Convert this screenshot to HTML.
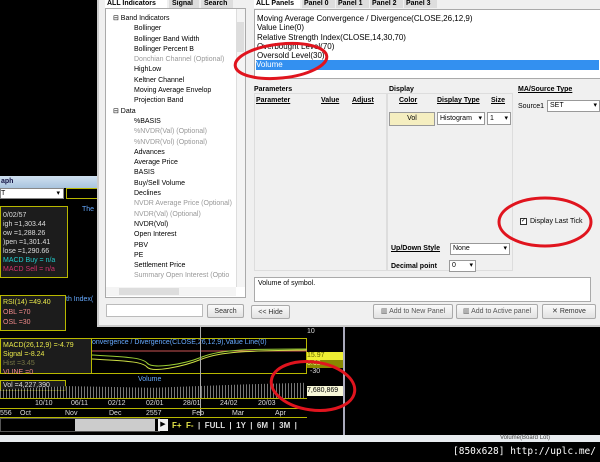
<!DOCTYPE html>
<html><head><meta charset="utf-8"><style>
*{margin:0;padding:0;box-sizing:border-box}
body{width:600px;height:462px;background:#000;position:relative;overflow:hidden;font-family:"Liberation Sans",sans-serif;font-size:7px;color:#000}
.a{position:absolute;white-space:nowrap}
.y{color:#e8e84a}
.box{position:absolute;border:1px solid #b8b800;background:#1c1c1c}
.tree div{height:10.3px;line-height:10.3px}
.g{color:#999}
.btn{position:absolute;background:linear-gradient(#fafafa,#e2e2e2);border:1px solid #aaa;border-radius:2px;text-align:center;line-height:13px;color:#333}
.sel{position:absolute;background:#fff;border:1px solid #999;line-height:10px;padding-left:2px}
.sel:after{content:"▾";position:absolute;right:2px;top:0}
</style></head><body>

<!-- chart window -->
<div class="a" style="left:0;top:176px;width:345px;height:266px;background:#000">
  <div class="a" style="left:0;top:0;width:345px;height:12px;background:linear-gradient(#cfe0f0,#a9c4de);color:#114;font-weight:bold;font-size:7px;line-height:12px;padding-left:1px">aph</div>
  <div class="a" style="left:0;top:12px;width:64px;height:11px;background:#fff;border:1px solid #888;line-height:10px">T<span style="position:absolute;right:3px">▾</span></div>
  <div class="a" style="left:66px;top:12px;width:40px;height:11px;border:1px solid #b8b800"></div>
  <div class="a" style="left:82px;top:30px;color:#6af;font-size:7px">The</div>
  <div class="box" style="left:0;top:30px;width:68px;height:72px;font-size:7px;line-height:9px;padding:4px 2px;color:#ddd">0/02/57<br>igh =1,303.44<br>ow =1,288.26<br>)pen =1,301.41<br>lose =1,290.66<br><span style="color:#2cc">MACD Buy = n/a</span><br><span style="color:#d2336b">MACD Sell = n/a</span></div>
  <div class="box" style="left:0;top:119px;width:66px;height:36px;font-size:7px;line-height:10px;padding:2px 2px;color:#e88"><span class="y">RSI(14) =49.40</span><br>OBL =70<br>OSL =30</div>
  <div class="a" style="left:66px;top:120px;color:#6af">th Index(</div>
  <div class="box" style="left:0;top:162px;width:92px;height:36px;font-size:7px;line-height:9px;padding:2px;color:#e88"><span class="y">MACD(26,12,9) =-4.79</span><br><span class="y">Signal =-8.24</span><br><span style="color:#774">Hist =3.45</span><br>VLINE =0</div>
  <div class="box" style="left:91px;top:162px;width:216px;height:36px;background:#000"></div>
  <div class="a" style="left:92px;top:163px;color:#6af">onvergence / Divergence(CLOSE,26,12,9),Value Line(0)</div>
  <svg class="a" style="left:92px;top:171px" width="215" height="26"><path d="M0 4 H215" stroke="#c55" stroke-width="1"/><path d="M0 8 C30 10 50 10 55 16 S90 18 110 10 S160 2 215 2" stroke="#9c3" fill="none"/><path d="M0 12 C30 14 50 14 55 20 S90 20 110 12 S160 4 215 3" stroke="#cd4" fill="none"/></svg>
  <div class="a" style="left:307px;top:152px;color:#ddd">10</div>
  <div class="a" style="left:307px;top:176px;width:38px;height:8px;background:#ee3;color:#660;line-height:8px">15.97</div>
  <div class="a" style="left:307px;top:184px;width:38px;height:8px;background:#880;color:#ee8;line-height:8px">0.63</div>
  <div class="a" style="left:310px;top:192px;color:#ddd">-30</div>
  <div class="a" style="left:138px;top:200px;color:#6af">Volume</div>
  <div class="box" style="left:0;top:204px;width:66px;height:11px;line-height:9px;padding-left:2px;color:#ddd">Vol =4,227,390</div>
  <div class="a" style="left:0;top:205px;width:306px;height:17px;background:repeating-linear-gradient(90deg,#aaa 0 1px,#000 1px 3px);opacity:.7;clip-path:polygon(0 50%,22% 30%,50% 40%,80% 20%,100% 10%,100% 100%,0 100%)"></div>
  <div class="a" style="left:200px;top:150px;width:1px;height:90px;background:#aaa"></div>
  <div class="a" style="left:307px;top:210px;width:38px;height:10px;background:#f8f8d8;line-height:10px;font-size:7px">7,680,869</div>
  <div class="a" style="left:0;top:222px;width:307px;height:10px;border-top:1px solid #b8b800;color:#ddd;line-height:10px">
    <span class="a" style="left:35px">10/10</span><span class="a" style="left:71px">06/11</span><span class="a" style="left:108px">02/12</span><span class="a" style="left:146px">02/01</span><span class="a" style="left:183px">28/01</span><span class="a" style="left:220px">24/02</span><span class="a" style="left:258px">20/03</span></div>
  <div class="a" style="left:0;top:232px;width:307px;height:10px;border-top:1px solid #b8b800;border-bottom:1px solid #b8b800;color:#ddd;line-height:10px">
    <span class="a" style="left:0">556</span><span class="a" style="left:20px">Oct</span><span class="a" style="left:65px">Nov</span><span class="a" style="left:109px">Dec</span><span class="a" style="left:146px">2557</span><span class="a" style="left:192px">Feb</span><span class="a" style="left:232px">Mar</span><span class="a" style="left:275px">Apr</span></div>
  <div class="a" style="left:0;top:242px;width:160px;height:14px;border:1px solid #555;background:#000"></div>
  <div class="a" style="left:75px;top:243px;width:80px;height:12px;background:#ccc"></div>
  <div class="a" style="left:158px;top:243px;width:10px;height:12px;background:#eee;color:#000;text-align:center;line-height:12px">▶</div>
  <div class="a" style="left:172px;top:244px;color:#ddd;font-weight:bold;font-size:8px;line-height:12px"><span class="y">F+ &nbsp;F-</span> &nbsp;| &nbsp;FULL &nbsp;| &nbsp;1Y &nbsp;| &nbsp;6M &nbsp;| &nbsp;3M &nbsp;|</div>
  <div class="a" style="left:343px;top:0;width:2px;height:259px;background:#aab"></div>
  <div class="a" style="left:0;top:259px;width:345px;height:7px;background:#e8ecf0"></div>
</div>
<div class="a" style="left:345px;top:435px;width:255px;height:7px;background:#e8ecf0"></div>
<div class="a" style="left:500px;top:435px;color:#444;font-size:6px;line-height:7px">Volume(Board Lot)</div>
<div class="a" style="left:453px;top:446px;color:#fff;font-family:'DejaVu Sans Mono',monospace;font-size:9.5px">[850x628] http://uplc.me/</div>

<!-- dialog -->
<div class="a" style="left:97px;top:0;width:503px;height:327px;background:#f0f0f0;border-left:2px solid #ccc;border-bottom:2px solid #ccc">
  <div class="a" style="left:6px;top:0;width:140px;height:8px;font-weight:bold;line-height:8px;font-size:7px">
    <span class="a" style="left:0;width:62px;padding-left:2px;background:#fff">ALL Indicators</span><span class="a" style="left:64px;width:30px;background:#ddd;padding-left:3px">Signal</span><span class="a" style="left:96px;width:32px;background:#ddd;padding-left:3px">Search</span></div>
  <div class="a" style="left:6px;top:8px;width:141px;height:290px;background:#fff;border:1px solid #aaa"></div>
  <div class="a tree" style="left:14px;top:14px;font-size:7px">
    <div>⊟ Band Indicators</div>
    <div style="padding-left:21px">Bollinger</div><div style="padding-left:21px">Bollinger Band Width</div><div style="padding-left:21px">Bollinger Percent B</div><div style="padding-left:21px" class="g">Donchian Channel (Optional)</div><div style="padding-left:21px">HighLow</div><div style="padding-left:21px">Keltner Channel</div><div style="padding-left:21px">Moving Average Envelop</div><div style="padding-left:21px">Projection Band</div>
    <div>⊟ Data</div>
    <div style="padding-left:21px">%BASIS</div><div style="padding-left:21px" class="g">%NVDR(Val) (Optional)</div><div style="padding-left:21px" class="g">%NVDR(Vol) (Optional)</div><div style="padding-left:21px">Advances</div><div style="padding-left:21px">Average Price</div><div style="padding-left:21px">BASIS</div><div style="padding-left:21px">Buy/Sell Volume</div><div style="padding-left:21px">Declines</div><div style="padding-left:21px" class="g">NVDR Average Price (Optional)</div><div style="padding-left:21px" class="g">NVDR(Val) (Optional)</div><div style="padding-left:21px">NVDR(Vol)</div><div style="padding-left:21px">Open Interest</div><div style="padding-left:21px">PBV</div><div style="padding-left:21px">PE</div><div style="padding-left:21px">Settlement Price</div><div style="padding-left:21px" class="g">Summary Open Interest (Optio</div>
  </div>
  <div class="a" style="left:137px;top:9px;width:9px;height:278px;background:#f4f4f4;border-left:1px solid #ddd"></div>
  <div class="a" style="left:138px;top:22px;width:7px;height:30px;background:#ddd"></div>
  <div class="a" style="left:7px;top:287px;width:130px;height:9px;background:#f4f4f4"></div>
  <div class="a" style="left:20px;top:288px;width:60px;height:7px;background:#ddd"></div>
  <div class="a" style="left:7px;top:304px;width:97px;height:13px;background:#fff;border:1px solid #bbb"></div>
  <div class="btn" style="left:108px;top:304px;width:37px;height:14px">Search</div>
  <div class="btn" style="left:152px;top:305px;width:39px;height:14px">&lt;&lt; Hide</div>

  <div class="a" style="left:155px;top:0;width:180px;height:9px;font-weight:bold;line-height:8px">
    <span class="a" style="left:0;width:46px;background:#fff;padding-left:2px">ALL Panels</span><span class="a" style="left:48px;width:33px;background:#ddd;padding-left:2px">Panel 0</span><span class="a" style="left:82px;width:33px;background:#ddd;padding-left:2px">Panel 1</span><span class="a" style="left:116px;width:33px;background:#ddd;padding-left:2px">Panel 2</span><span class="a" style="left:150px;width:33px;background:#ddd;padding-left:2px">Panel 3</span></div>
  <div class="a" style="left:155px;top:9px;width:348px;height:70px;background:#fff;border:1px solid #aaa;font-size:8px;line-height:9.3px;padding:4px 2px 0">
    <div>Moving Average Convergence / Divergence(CLOSE,26,12,9)</div><div>Value Line(0)</div><div>Relative Strength Index(CLOSE,14,30,70)</div><div>Overbought Level(70)</div><div>Oversold Level(30)</div><div style="background:#3390f0;color:#fff;margin-left:-1px">Volume</div>
  </div>
  <div class="a" style="left:155px;top:86px;font-weight:bold;font-size:7px">Parameters</div>
  <div class="a" style="left:155px;top:93px;width:133px;height:178px;border:1px solid #ddd"></div>
  <div class="a" style="left:157px;top:97px;font-weight:bold;text-decoration:underline">Parameter</div>
  <div class="a" style="left:222px;top:97px;font-weight:bold;text-decoration:underline">Value</div>
  <div class="a" style="left:253px;top:97px;font-weight:bold;text-decoration:underline">Adjust</div>
  <div class="a" style="left:290px;top:86px;font-weight:bold">Display</div>
  <div class="a" style="left:288px;top:93px;width:126px;height:178px;border:1px solid #ddd"></div>
  <div class="a" style="left:300px;top:97px;font-weight:bold;text-decoration:underline">Color</div>
  <div class="a" style="left:338px;top:97px;font-weight:bold;text-decoration:underline">Display Type</div>
  <div class="a" style="left:392px;top:97px;font-weight:bold;text-decoration:underline">Size</div>
  <div class="a" style="left:290px;top:112px;width:46px;height:14px;background:#f5eec0;border:1px solid #999;text-align:center;line-height:12px">Vol</div>
  <div class="sel" style="left:338px;top:112px;width:48px;height:13px;line-height:11px">Histogram</div>
  <div class="sel" style="left:388px;top:112px;width:24px;height:13px;line-height:11px">1</div>
  <div class="a" style="left:419px;top:86px;font-weight:bold;text-decoration:underline">MA/Source Type</div>
  <div class="a" style="left:419px;top:103px">Source1</div>
  <div class="sel" style="left:448px;top:100px;width:53px;height:12px">SET</div>
  <div class="a" style="left:421px;top:218px;width:7px;height:7px;border:1px solid #333;background:#fff;font-size:6px;line-height:5px">✓</div>
  <div class="a" style="left:431px;top:218px">Display Last Tick</div>
  <div class="a" style="left:292px;top:245px;font-weight:bold;text-decoration:underline">Up/Down Style</div>
  <div class="sel" style="left:351px;top:243px;width:60px;height:12px">None</div>
  <div class="a" style="left:292px;top:263px;font-weight:bold">Decimal point</div>
  <div class="sel" style="left:350px;top:260px;width:27px;height:12px">0</div>
  <div class="a" style="left:155px;top:277px;width:337px;height:25px;background:#fff;border:1px solid #aaa;padding:2px 3px">Volume of symbol.</div>
  <div class="btn" style="left:274px;top:304px;width:80px;height:15px;color:#555">▥ Add to New Panel</div>
  <div class="btn" style="left:357px;top:304px;width:82px;height:15px;color:#555">▥ Add to Active panel</div>
  <div class="btn" style="left:443px;top:304px;width:54px;height:15px">✕ Remove</div>
</div>

<!-- red ellipses -->
<svg class="a" style="left:0;top:0" width="600" height="462">
<g fill="none" stroke="#e0141e" stroke-width="3">
<ellipse cx="281" cy="61" rx="46" ry="17" transform="rotate(-6 281 61)"/>
<ellipse cx="545" cy="222" rx="46" ry="24"/>
<ellipse cx="313" cy="386" rx="42" ry="24" transform="rotate(8 313 386)"/>
</g></svg>
</body></html>
